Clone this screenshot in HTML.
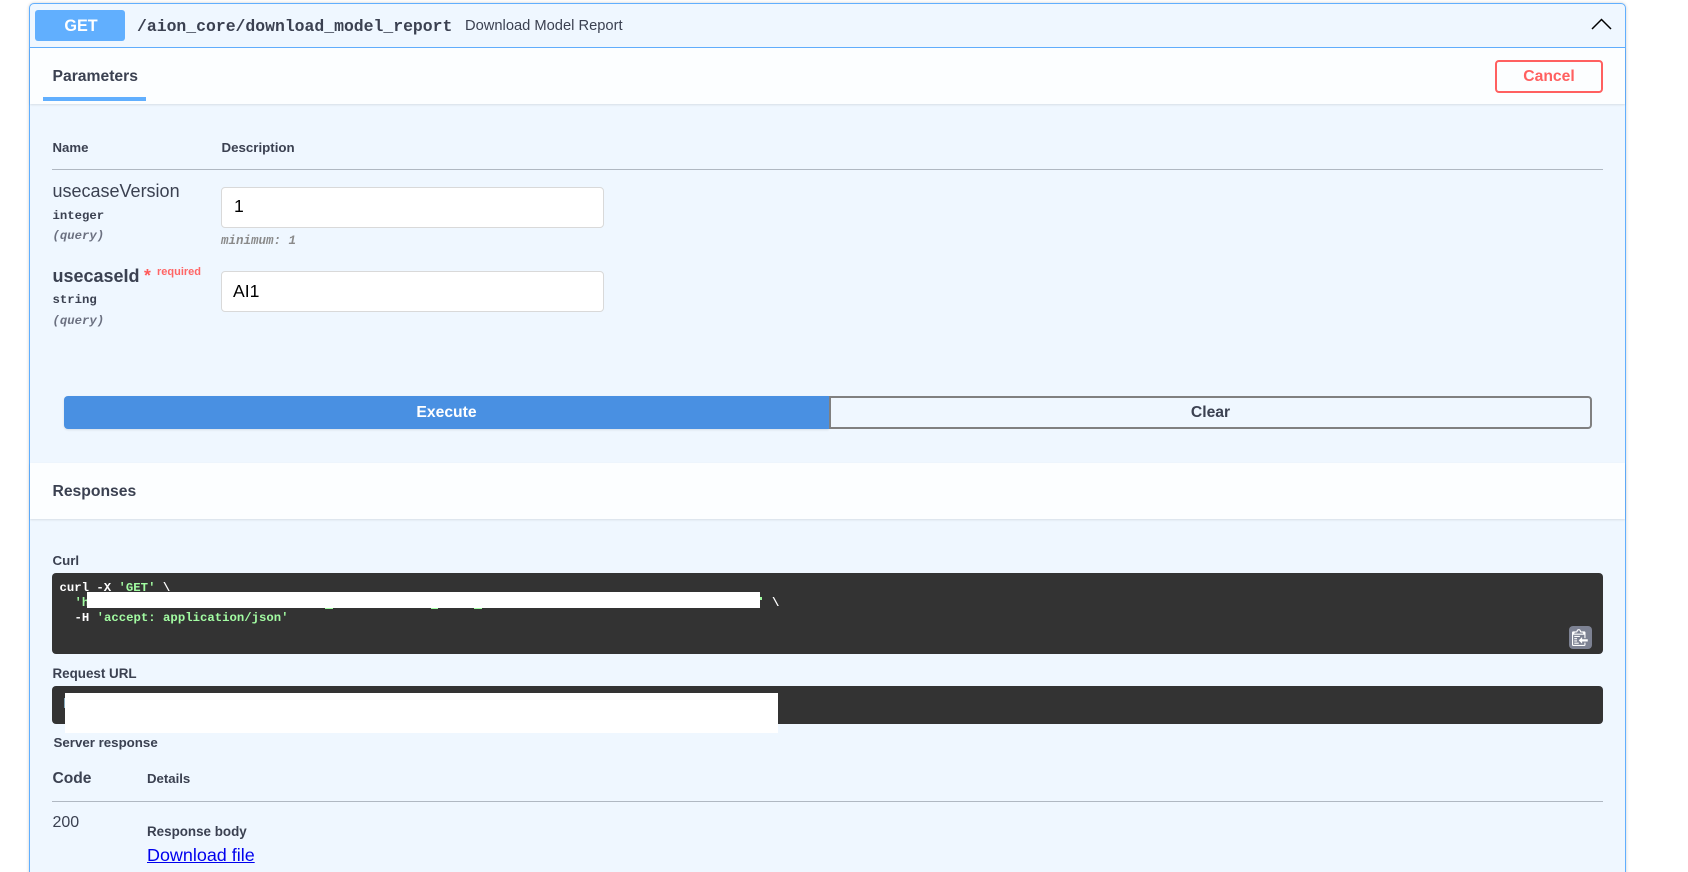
<!DOCTYPE html>
<html lang="en">
<head>
<meta charset="utf-8">
<title>Download Model Report</title>
<style>
html,body{margin:0;padding:0;width:1688px;height:872px;overflow:hidden;background:#fff;}
body{position:relative;font-family:"Liberation Sans",Arial,sans-serif;color:#3b4151;}
.a{position:absolute;box-sizing:border-box;}
.t{position:absolute;white-space:nowrap;line-height:20px;}
.b{font-weight:700;}
.m{font-family:"Liberation Mono",monospace;}
.w{background:#fff;position:absolute;}
.cd{position:absolute;white-space:pre;font-family:"Liberation Mono",monospace;font-size:12.3px;line-height:15px;font-weight:700;}
.g{color:#a2fca2;}
.gb{position:absolute;background:#a2fca2;height:1px;}
</style>
</head>
<body>
<!-- outer box -->
<div class="a" style="left:29px;top:3px;width:1597px;height:900px;background:#eff7ff;border:1px solid #61affe;border-radius:5px;box-shadow:0 0 3px rgba(0,0,0,.19);"></div>
<!-- header rule -->
<div class="a" style="left:30px;top:47px;width:1595px;height:1px;background:#61affe;"></div>
<!-- GET -->
<div class="a b" style="left:35px;top:10px;width:90px;height:31px;background:#61affe;border-radius:3px;color:#fff;font-size:16.2px;line-height:32px;text-align:center;padding-left:2px;">GET</div>
<div class="t m" style="left:137px;top:17px;font-size:16.43px;font-weight:700;color:#3b4151;">/aion_core/download_model_report</div>
<div class="t" style="left:465px;top:16px;font-size:14.7px;color:#3b4151;">Download Model Report</div>
<svg class="a" style="left:1590px;top:15px;" width="24" height="17" viewBox="0 0 24 17"><path d="M2 14 L11.5 4.5 L21 14" fill="none" stroke="#000" stroke-width="1.5"/></svg>

<!-- tabs header -->
<div class="a" style="left:30px;top:48px;width:1595px;height:56px;background:rgba(255,255,255,.8);box-shadow:0 1px 2px rgba(0,0,0,.1);"></div>
<div class="t b" style="left:52.5px;top:67px;font-size:15.7px;">Parameters</div>
<div class="a" style="left:43px;top:97px;width:103px;height:4px;background:#61affe;"></div>
<div class="a b" style="left:1495px;top:60px;width:108px;height:33px;border:2px solid #ff6060;border-radius:4px;color:#ff6060;font-size:15.7px;line-height:29px;text-align:center;background:transparent;">Cancel</div>

<!-- param table -->
<div class="t b" style="left:52.5px;top:138px;font-size:13.2px;">Name</div>
<div class="t b" style="left:221.5px;top:138px;font-size:13.3px;">Description</div>
<div class="a" style="left:52px;top:169px;width:1551px;height:1px;background:rgba(59,65,81,.35);"></div>

<div class="t" style="left:52.5px;top:181px;font-size:18px;">usecaseVersion</div>
<div class="t m" style="left:52.5px;top:206px;font-size:12.3px;font-weight:700;">integer</div>
<div class="t m" style="left:52.5px;top:226px;font-size:12.3px;font-style:italic;font-weight:700;color:#6b7080;">(query)</div>
<div class="a" style="left:221px;top:187px;width:383px;height:41px;background:#fff;border:1px solid #d9d9d9;border-radius:4px;color:#000;font-size:17.6px;line-height:37px;padding-left:12px;">1</div>
<div class="t m" style="left:221px;top:231px;font-size:12.5px;font-style:italic;font-weight:700;color:#8a8a8a;">minimum: 1</div>

<div class="t b" style="left:52.5px;top:266px;font-size:18px;">usecaseId</div>
<div class="t b" style="left:144px;top:265px;font-size:17.6px;color:#ff5a5a;">*</div>
<div class="t b" style="left:157px;top:262px;font-size:11px;color:#ff6666;">required</div>
<div class="t m" style="left:52.5px;top:290px;font-size:12.3px;font-weight:700;">string</div>
<div class="t m" style="left:52.5px;top:310.5px;font-size:12.3px;font-style:italic;font-weight:700;color:#6b7080;">(query)</div>
<div class="a" style="left:221px;top:271px;width:383px;height:41px;background:#fff;border:1px solid #d9d9d9;border-radius:4px;color:#000;font-size:17.6px;line-height:39px;padding-left:11px;">AI1</div>

<!-- buttons -->
<div class="a b" style="left:64px;top:396px;width:765px;height:33px;background:#4990e2;border-radius:4px 0 0 4px;color:#fff;font-size:15.7px;line-height:33px;text-align:center;box-shadow:0 1px 2px rgba(0,0,0,.1);">Execute</div>
<div class="a b" style="left:829px;top:396px;width:763px;height:33px;border:2px solid #808080;border-radius:0 4px 4px 0;color:#3b4151;font-size:15.7px;line-height:29px;text-align:center;">Clear</div>

<!-- responses header -->
<div class="a" style="left:30px;top:463px;width:1595px;height:56px;background:rgba(255,255,255,.8);box-shadow:0 1px 2px rgba(0,0,0,.1);"></div>
<div class="t b" style="left:52.5px;top:481.5px;font-size:15.7px;">Responses</div>

<!-- curl -->
<div class="t b" style="left:52.5px;top:550.5px;font-size:13.3px;">Curl</div>
<div class="a" style="left:52px;top:573px;width:1551px;height:81px;background:#333;border-radius:4px;"></div>
<div class="cd" style="left:59.5px;top:581px;color:#fff;">curl -X <span class="g">'GET'</span> \</div>
<div class="cd g" style="left:74.5px;top:596px;">'h</div>
<div class="cd" style="left:74.5px;top:611px;color:#fff;">-H <span class="g">'accept: application/json'</span></div>
<div class="w" style="left:87px;top:592px;width:673px;height:16px;"></div>
<div class="gb" style="left:325px;top:608px;width:8px;"></div>
<div class="gb" style="left:431px;top:608px;width:7px;"></div>
<div class="gb" style="left:474px;top:608px;width:8px;"></div>
<div class="a" style="left:760px;top:597px;width:2px;height:3px;background:#a2fca2;"></div>
<div class="cd" style="left:772px;top:596px;color:#fff;">\</div>
<!-- copy icon -->
<div class="a" style="left:1569px;top:626px;width:23px;height:23px;background:#7d8293;border-radius:4px;"></div>
<svg class="a" style="left:1572px;top:628px;" width="18" height="18" viewBox="0 0 16 16"><path fill="#fff" fill-rule="evenodd" d="M2 13h4v1H2v-1zm5-6H2v1h5V7zm2 3V8l-3 3 3 3v-2h5v-2H9zM4.5 9H2v1h2.5V9zM2 12h2.5v-1H2v1zm9 1h1v2c-.02.28-.11.52-.3.7-.19.18-.42.28-.7.3H1c-.55 0-1-.45-1-1V4c0-.55.45-1 1-1h3c0-1.11.89-2 2-2 1.11 0 2 .89 2 2h3c.55 0 1 .45 1 1v5h-1V6H1v9h10v-2zM2 5h8c0-.55-.45-1-1-1H8c-.55 0-1-.45-1-1s-.45-1-1-1-1 .45-1 1-.45 1-1 1H3c-.55 0-1 .45-1 1z"/></svg>

<!-- request url -->
<div class="t b" style="left:52.5px;top:663.5px;font-size:13.4px;">Request URL</div>
<div class="a" style="left:52px;top:686px;width:1551px;height:38px;background:#333;border-radius:4px;"></div>
<div class="a" style="left:64px;top:698px;width:1px;height:10px;background:#8ab;"></div>
<div class="w" style="left:65px;top:693px;width:713px;height:40px;"></div>

<!-- server response -->
<div class="t b" style="left:53.5px;top:732.5px;font-size:13.3px;">Server response</div>
<div class="t b" style="left:52.5px;top:768.5px;font-size:15.6px;">Code</div>
<div class="t b" style="left:147px;top:769px;font-size:13.2px;">Details</div>
<div class="a" style="left:52px;top:801px;width:1551px;height:1px;background:rgba(59,65,81,.35);"></div>
<div class="t" style="left:52.5px;top:812.5px;font-size:16px;">200</div>
<div class="t b" style="left:147px;top:821.5px;font-size:13.4px;">Response body</div>
<a class="t" style="left:147px;top:845px;font-size:17.95px;color:#0000ee;text-decoration:underline;">Download file</a>
</body>
</html>
